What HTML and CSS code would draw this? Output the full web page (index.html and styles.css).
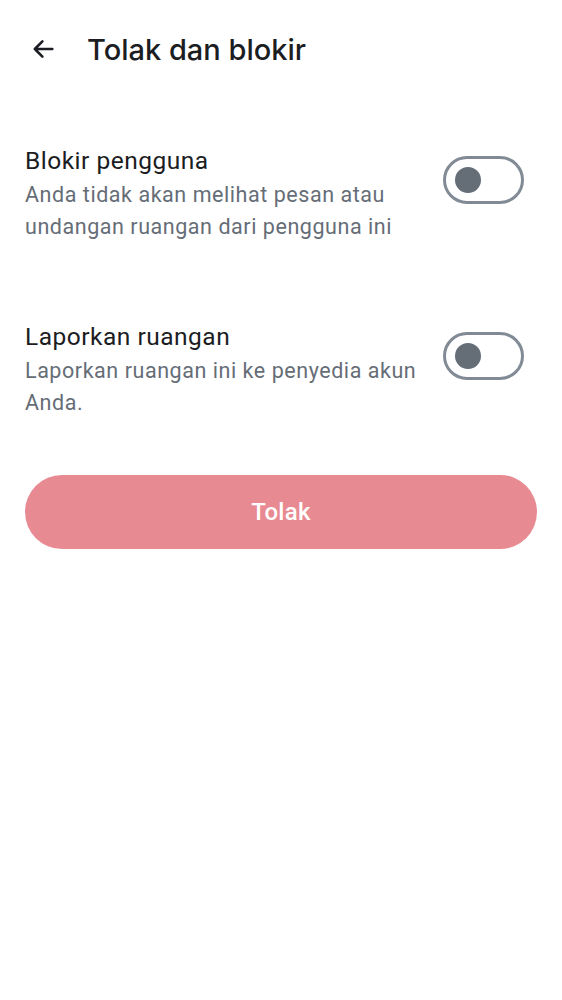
FILE: index.html
```html
<!DOCTYPE html>
<html lang="id">
<head>
<meta charset="utf-8">
<link rel="stylesheet" href="styles.css">
</head>
<body>
<div class="screen">
  <header class="topbar">
    <button class="back" aria-label="Kembali">
      <svg width="24" height="24" viewBox="0 0 24 24"><path d="M20 12H5M11.5 5.5L5 12l6.5 6.5" fill="none" stroke="#1b1d22" stroke-width="2.2" stroke-linecap="round" stroke-linejoin="round"/></svg>
    </button>
    <h1 class="title">Tolak dan blokir</h1>
  </header>

  <section class="option">
    <div class="texts">
      <div class="label">Blokir pengguna</div>
      <div class="desc">Anda tidak akan melihat pesan atau undangan ruangan dari pengguna ini</div>
    </div>
    <div class="switch"><span class="thumb"></span></div>
  </section>

  <section class="option second">
    <div class="texts">
      <div class="label">Laporkan ruangan</div>
      <div class="desc">Laporkan ruangan ini ke penyedia akun Anda.</div>
    </div>
    <div class="switch"><span class="thumb"></span></div>
  </section>

  <div class="actions">
    <button class="reject">Tolak</button>
  </div>
</div>
</body>
</html>
```
FILE: styles.css
```css
* { box-sizing: border-box; }
html, body { margin: 0; padding: 0; background: #ffffff; }
body { font-family: Roboto, "Noto Sans", sans-serif; color: #1b1d22; }
.screen { width: 562px; min-height: 1000px; }
.topbar { display: flex; align-items: center; height: 98px; padding-left: 29px; }
.back { border: 0; background: none; padding: 0; width: 28px; height: 28px; display: flex; align-items: center; justify-content: center; }
.back svg { width: 30px; height: 30px; }
.title { margin: 0 0 0 30px; font-family: Inter, Roboto, sans-serif; font-weight: 500; font-size: 29px; letter-spacing: 0; color: #1b1d22; line-height: 1; }
.option { display: flex; align-items: flex-start; padding: 47px 38px 0 25px; gap: 20px; }
.option.second { padding-top: 79px; }
.texts { flex: 1; }
.label { font-size: 24.5px; line-height: 31px; color: #1b1d22; letter-spacing: 0.5px; }
.desc { font-size: 21.5px; line-height: 31.5px; color: #656d77; letter-spacing: 0.55px; margin-top: 3px; }
.switch { width: 81px; height: 48px; margin-top: 11px; border: 3px solid #818a95; border-radius: 24px; display: flex; align-items: center; padding-left: 9px; flex: none; }
.switch .thumb { width: 26px; height: 26px; border-radius: 50%; background: #656d77; }
.actions { padding: 57px 25px 0 25px; }
.reject { width: 100%; height: 74px; border: 0; border-radius: 37px; background: #e88a91; color: #ffffff; font-family: Roboto, sans-serif; font-weight: 500; font-size: 24px; letter-spacing: 0.3px; }
```
